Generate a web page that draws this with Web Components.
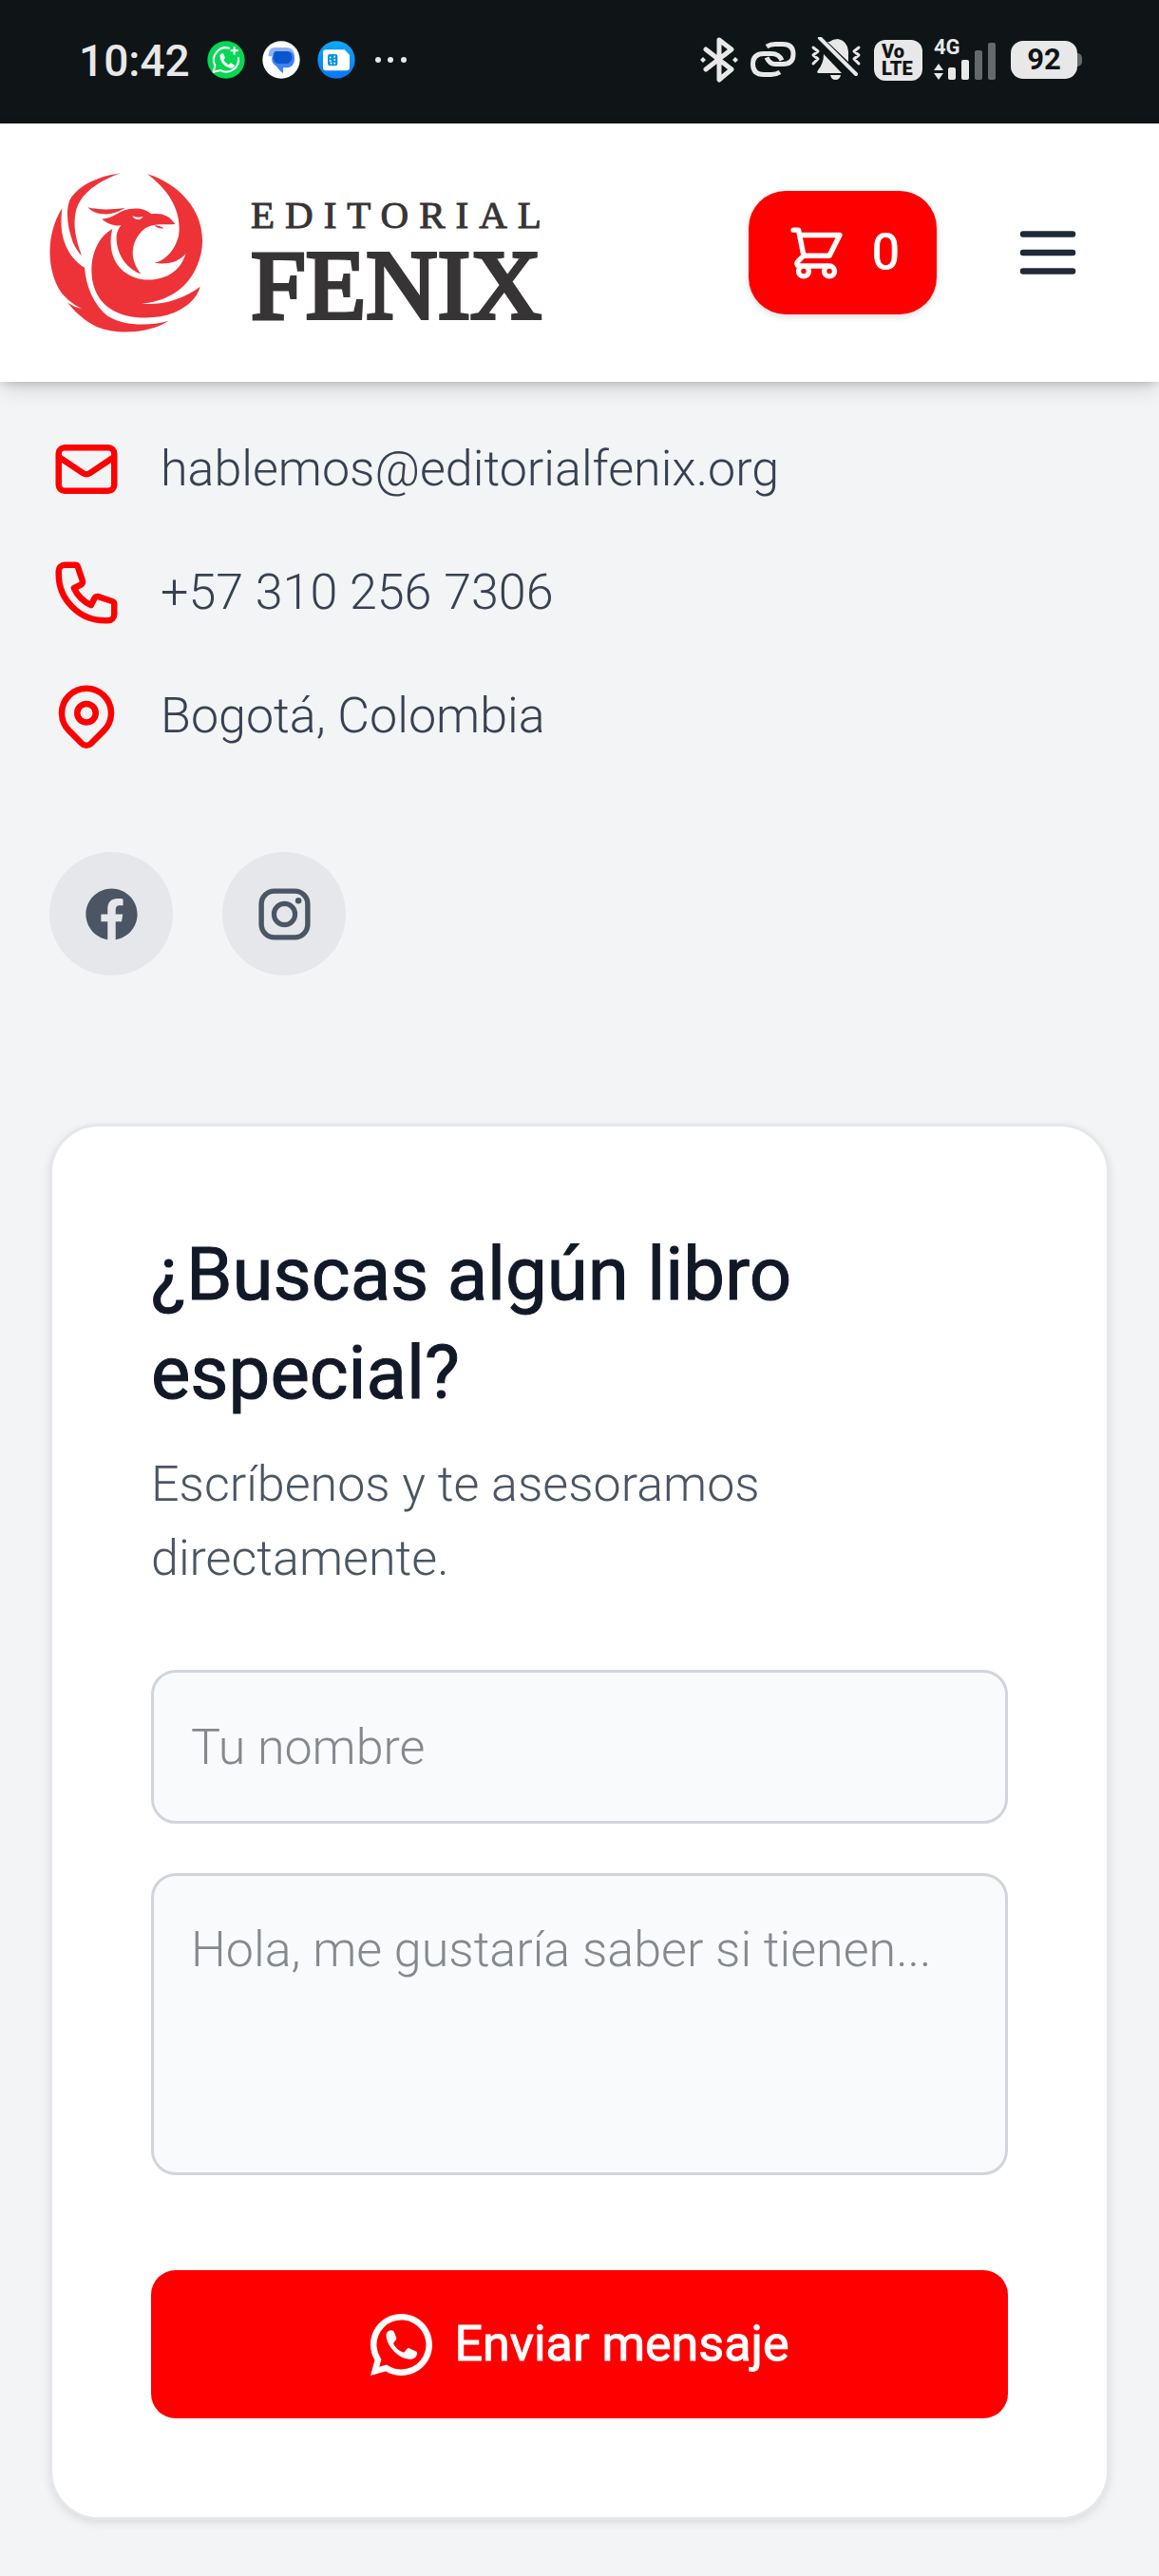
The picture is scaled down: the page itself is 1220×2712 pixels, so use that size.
<!DOCTYPE html>
<html lang="es">
<head>
<meta charset="UTF-8">
<meta name="viewport" content="width=device-width, initial-scale=1">
<title>Editorial Fenix</title>
<style>
    :root {
        --brand: #ff0000;
        --ink: #111827;
        --panel: #f3f4f6;
    }
    body {
        margin: 0;
        min-height: 100vh;
        background: var(--panel);
        color: #374151;
        font-family: Roboto, "Liberation Sans", sans-serif;
        font-size: 52px;
        line-height: 78px;
        font-weight: 300;
    }
    main {
        padding: 53px 52px 52px;
    }
    .contacts {
        display: flex;
        flex-direction: column;
        gap: 52px;
    }
    .social {
        display: flex;
        gap: 52px;
        margin: 104px 0 156px;
    }
</style>
</head>
<body>
<status-bar></status-bar>
<site-header count="0"></site-header>
<main>
    <div class="contacts">
        <contact-item icon="mail" href="mailto:hablemos@editorialfenix.org">hablemos@editorialfenix.org</contact-item>
        <contact-item icon="phone" href="tel:+573102567306">+57 310 256 7306</contact-item>
        <contact-item icon="pin">Bogotá, Colombia</contact-item>
    </div>
    <div class="social">
        <social-link icon="facebook" label="Facebook"></social-link>
        <social-link icon="instagram" label="Instagram"></social-link>
    </div>
    <contact-card>
        <span slot="title">¿Buscas algún libro especial?</span>
        <span slot="text">Escríbenos y te asesoramos directamente.</span>
    </contact-card>
</main>

<script>
const stroked = 'fill="none" stroke="currentColor" stroke-width="2" stroke-linecap="round" stroke-linejoin="round"';

const ICONS = {
    cart: `<path ${stroked} d="M3 3h2l.4 2M7 13h10l4-8H5.4M7 13L5.4 5M7 13l-2.293 2.293c-.63.63-.184 1.707.707 1.707H17m0 0a2 2 0 100 4 2 2 0 000-4zm-8 2a2 2 0 11-4 0 2 2 0 014 0z"/>`,
    menu: `<path ${stroked} d="M4 6h16M4 12h16M4 18h16"/>`,
    mail: `<path ${stroked} d="M3 8l7.89 5.26a2 2 0 002.22 0L21 8M5 19h14a2 2 0 002-2V7a2 2 0 00-2-2H5a2 2 0 00-2 2v10a2 2 0 002 2z"/>`,
    phone: `<path ${stroked} d="M3 5a2 2 0 012-2h3.28a1 1 0 01.948.684l1.498 4.493a1 1 0 01-.502 1.21l-2.257 1.13a11.042 11.042 0 005.516 5.516l1.13-2.257a1 1 0 011.21-.502l4.493 1.498a1 1 0 01.684.949V19a2 2 0 01-2 2h-1C9.716 21 3 14.284 3 6V5z"/>`,
    pin: `<path ${stroked} d="M17.657 16.657L13.414 20.9a1.998 1.998 0 01-2.827 0l-4.244-4.243a8 8 0 1111.314 0z"/><path ${stroked} d="M15 11a3 3 0 11-6 0 3 3 0 016 0z"/>`,
    facebook: `<path d="M12 2C6.478 2 2 6.477 2 12c0 4.99 3.656 9.126 8.437 9.879v-6.988h-2.54v-2.891h2.54V9.798c0-2.508 1.493-3.891 3.776-3.891 1.094 0 2.24.195 2.24.195v2.459h-1.264c-1.24 0-1.628.772-1.628 1.563v1.875h2.771l-.443 2.891h-2.328v6.988C18.344 21.129 22 16.992 22 12c0-5.523-4.477-10-10-10z"/>`,
    instagram: `<rect x="3" y="3" width="18" height="18" rx="5" fill="none" stroke="currentColor" stroke-width="2"/><circle cx="12" cy="12" r="4.1" fill="none" stroke="currentColor" stroke-width="1.9"/><circle cx="17.4" cy="6.7" r="1.2"/>`,
    whatsapp: `<path d="M7.25 18.49l.73.43A8 8 0 0 0 12 20a8 8 0 1 0-6.92-3.98l.43.73-.66 2.4 2.4-.66zM2 22l1.36-4.97A9.96 9.96 0 0 1 2 12C2 6.48 6.48 2 12 2s10 4.48 10 10-4.48 10-10 10c-1.84 0-3.57-.5-5.05-1.37L2 22z"/>
        <path d="M7.1 8.9C7.1 8 7.9 7.3 8.7 7.3c.5 0 .8.2 1 .7l.6 1.5c.2.5.1.8-.2 1.1l-.5.6c-.2.3-.2.5 0 .8.7 1.1 1.6 1.9 2.8 2.4.3.1.5.1.7-.2l.7-.8c.2-.3.5-.4.9-.2l1.9.9c.4.2.6.4.5.8-.1 1.1-1.2 1.8-2.4 1.8-3.6-.2-7.6-4.3-7.6-7.8z"/>`
};

class UiIcon extends HTMLElement {
    constructor() {
        super();
        this.attachShadow({ mode: 'open' });
    }

    connectedCallback() {
        // "tight" drops the empty margin round the drawing
        const box = this.hasAttribute('tight') ? '2 2 20 20' : '0 0 24 24';
        this.shadowRoot.innerHTML = `
            <style>
                :host { display: block; flex: none; width: 78px; height: 78px; }
                svg { display: block; width: 100%; height: 100%; }
            </style>
            <svg viewBox="${box}" fill="currentColor" aria-hidden="true">${ICONS[this.getAttribute('name')]}</svg>
        `;
    }
}

class StatusBar extends HTMLElement {
    constructor() {
        super();
        this.attachShadow({ mode: 'open' });
        this.shadowRoot.innerHTML = `
            <style>
                :host {
                    display: flex;
                    justify-content: space-between;
                    align-items: center;
                    height: 130px;
                    padding: 0 81px 4px 83px;
                    box-sizing: border-box;
                    background: #0f1416;
                    color: #e8e8e8;
                    font-weight: 500;
                }
                .side { display: flex; align-items: center; gap: 18px; }
                .right { gap: 12px; }
                .time { font-size: 46px; line-height: 56px; padding-top: 2px; }
                svg { display: block; flex: none; }
                .volte {
                    width: 51px;
                    height: 43px;
                    box-sizing: border-box;
                    padding: 3px 0 0 8px;
                    border-radius: 12px;
                    background: #e8e8e8;
                    color: #0f1416;
                    font-size: 20px;
                    font-weight: 900;
                    line-height: 18px;
                }
                .volte span { display: block; }
                .signal { position: relative; width: 69px; height: 48px; }
                .signal b {
                    position: absolute;
                    left: 0;
                    top: 0;
                    font-size: 22px;
                    line-height: 22px;
                    font-weight: 700;
                }
                .battery { display: flex; align-items: center; }
                .level {
                    width: 70px;
                    height: 40px;
                    border-radius: 13px;
                    background: #e8e8e8;
                    color: #0f1416;
                    font-size: 31px;
                    font-weight: 700;
                    line-height: 40px;
                    text-align: center;
                }
                .nub { width: 5px; height: 14px; border-radius: 0 5px 5px 0; background: #66696b; }
            </style>
            <div class="side">
                <span class="time">10:42</span>
                <svg width="40" height="40" viewBox="0 0 120 120">
                    <circle cx="60" cy="60" r="59" fill="#06d755"/>
                    <path d="M70 23A39 39 0 0 0 25 78L20 98L42 93A39 39 0 0 0 99 54" fill="none" stroke="#fff" stroke-width="6" stroke-linecap="round" stroke-linejoin="round"/>
                    <path d="M40 46q4-8 11-6l6 13-5 8q6 10 16 15l7-6 12 7q-2 10-13 9Q42 80 40 46z" fill="#fff"/>
                    <path d="M86 21v20M76 31h20" stroke="#fff" stroke-width="6" stroke-linecap="round"/>
                </svg>
                <svg width="40" height="40" viewBox="0 0 120 120">
                    <circle cx="60" cy="60" r="59" fill="#fff"/>
                    <path d="M39 21h35c22 0 28 14 28 28H20c0-18 6-28 19-28z" fill="#8ab0f8"/>
                    <path d="M48 34h36c12 0 18 10 18 23 0 18-11 28-26 28H66v17c-8-5-14-12-21-22-12-7-16-17-14-29z" fill="#4083f5"/>
                    <path d="M44 33h34c10 0 16 8 16 19s-7 20-17 20H52c-10 0-17-9-17-20s2-19 9-19z" fill="#0957d0"/>
                </svg>
                <svg width="40" height="40" viewBox="0 0 120 120">
                    <defs><linearGradient id="sim" x2="0" y2="1"><stop stop-color="#10a8f5"/><stop offset="1" stop-color="#0878f8"/></linearGradient></defs>
                    <circle cx="60" cy="60" r="59" fill="url(#sim)"/>
                    <path d="M28 28h58l16 17v39q0 10-10 10H28q-10 0-10-10V38q0-10 10-10z" fill="#fff"/>
                    <rect x="33" y="42" width="31" height="37" rx="7" fill="#0a93df"/>
                    <path d="M41 50v5M41 60v5M41 71h5M52 50h5M52 60h5M52 71h5" stroke="#fff" stroke-width="5"/>
                </svg>
                <svg width="36" height="40" viewBox="0 0 36 40" fill="currentColor">
                    <circle cx="6" cy="20" r="3"/><circle cx="19" cy="20" r="3"/><circle cx="33" cy="20" r="3"/>
                </svg>
            </div>
            <div class="side right">
                <svg width="42" height="48" viewBox="0 0 42 48" fill="none" stroke="currentColor" stroke-width="5" stroke-linejoin="round" stroke-linecap="round">
                    <path d="M7 13l27 21-13 11V3l13 10L7 34"/>
                    <path d="M4 21l3 3-3 3-3-3zM38 21l3 3-3 3-3-3z" fill="currentColor" stroke="none"/>
                </svg>
                <svg width="51" height="48" viewBox="0 0 51 48" fill="none" stroke="currentColor" stroke-width="5">
                    <path d="M17 10q4-2.500 9-2.500h8q11 0 11 10.500t-11 10.500h-8q-6 0-9-7"/>
                    <path d="M31 37q-4 2.500-9 2.500h-8q-11.500 0-11.500-11t11.500-11h8q8 0 11 7"/>
                </svg>
                <svg width="55" height="48" viewBox="0 0 55 48" fill="currentColor">
                    <path d="M20 5q4-3 9-3 10 2 11 13v11L18 5zM14 18l19 20H9q-3 0-1-3 6-7 6-17zM21 40h11q-1 5-5.500 5T21 40z"/>
                    <path d="M10 1l38 38" fill="none" stroke="currentColor" stroke-width="4" stroke-linecap="round"/>
                    <path d="M3 11l5 4-5 4 5 4-5 5M51 11l-5 4 5 4-5 4 5 5" fill="none" stroke="currentColor" stroke-width="3" stroke-linecap="round" stroke-linejoin="round"/>
                </svg>
                <div class="volte"><span>Vo</span><span>LTE</span></div>
                <div class="signal">
                    <b>4G</b>
                    <svg width="69" height="48" viewBox="0 0 69 48" fill="currentColor">
                        <path d="M0 35l5-7 5 7zM0 38h10l-5 7z"/>
                        <rect x="15" y="32" width="8" height="13" rx="2"/>
                        <rect x="29" y="24" width="8" height="21" rx="2"/>
                        <rect x="43" y="14" width="8" height="31" rx="2" fill="#66696b"/>
                        <rect x="57" y="6" width="8" height="39" rx="2" fill="#66696b"/>
                    </svg>
                </div>
                <div class="battery"><span class="level">92</span><span class="nub"></span></div>
            </div>
        `;
    }
}

class FenixLogo extends HTMLElement {
    constructor() {
        super();
        this.attachShadow({ mode: 'open' });
        this.shadowRoot.innerHTML = `
            <style>
                :host { display: block; }
                a { display: flex; align-items: center; gap: 50px; color: #373435; text-decoration: none; }
                svg { display: block; width: 162px; height: 168px; }
                .words {
                    display: flex;
                    flex-direction: column;
                    gap: 17px;
                    padding-top: 10px;
                    font-family: "Liberation Serif", serif;
                    font-weight: 400;
                }
                .top { font-size: 41px; line-height: 40px; letter-spacing: 11px; -webkit-text-stroke: 1px; }
                .name { font-size: 104px; line-height: 74px; -webkit-text-stroke: 4px; }
            </style>
            <a href="/">
                <svg viewBox="66 66 486 504" fill="#ee3338" aria-hidden="true">
                    <path d="M292 67C225 76 160 102 130 152C116 190 124 240 140 285C148 303 158 317 168 328C150 280 140 235 149 190C162 132 220 92 292 67z"/>
                    <path d="M106 178C70 235 56 315 78 390C98 455 150 520 215 552C290 582 390 568 443 533C375 552 300 548 250 518C205 482 182 425 177 365C140 345 112 300 105 250C102 220 104 195 106 178z"/>
                    <path d="M265 243C190 285 185 400 220 455C265 530 370 530 430 517C485 503 530 470 542 425C490 465 420 485 358 479C450 470 522 420 545 320C568 205 490 105 375 70C450 125 485 195 474 265C463 310 430 345 398 350C440 358 478 345 497 320C478 380 430 408 360 403C300 392 262 350 260 290C259 270 262 255 265 243z"/>
                    <path d="M187 175C220 183 260 183 305 177C280 192 260 198 235 196C212 194 198 186 187 175z"/>
                    <path d="M232 212C265 208 275 195 300 185C330 175 365 175 388 196C420 192 445 200 463 228C430 230 395 225 370 240C335 265 320 310 335 350C340 365 348 375 355 385C310 370 275 320 278 265C280 250 285 240 292 232C270 234 248 226 232 212zM398 232C410 233 420 236 427 241C415 243 405 240 398 232z"/>
                    <path fill="#fff" d="M327 202Q343 209 362 204Q356 215 342 213Q332 210 327 202zM93 430Q120 472 168 495Q120 485 88 440z"/>
                </svg>
                <span class="words">
                    <span class="top">EDITORIAL</span>
                    <span class="name">FENIX</span>
                </span>
            </a>
        `;
    }
}

class SiteHeader extends HTMLElement {
    constructor() {
        super();
        this.attachShadow({ mode: 'open' });
    }

    connectedCallback() {
        this.shadowRoot.innerHTML = `
            <style>
                :host {
                    display: block;
                    position: relative;
                    background: #fff;
                    box-shadow: 0 13px 20px -3px rgba(0, 0, 0, 0.1), 0 6px 13px -6px rgba(0, 0, 0, 0.1), 0 0 10px rgba(0, 0, 0, 0.15);
                }
                header {
                    display: flex;
                    align-items: center;
                    justify-content: space-between;
                    height: 272px;
                    padding: 0 52px;
                }
                nav { display: flex; gap: 52px; }
                button {
                    display: flex;
                    align-items: center;
                    border: 0;
                    background: none;
                    font: inherit;
                    cursor: pointer;
                }
                .cart {
                    gap: 26px;
                    height: 130px;
                    padding: 0 39px;
                    border-radius: 39px;
                    background: var(--brand);
                    color: #fff;
                    font-weight: 400;
                    -webkit-text-stroke: 1px;
                    box-shadow: 0 3px 7px rgba(0, 0, 0, 0.12);
                }
                .cart ui-icon { width: 65px; height: 65px; }
                .menu { padding: 26px; color: #1f2937; }
            </style>
            <header>
                <fenix-logo></fenix-logo>
                <nav>
                    <button class="cart" type="button" aria-label="Carrito"><ui-icon name="cart"></ui-icon><span>${this.getAttribute('count')}</span></button>
                    <button class="menu" type="button" aria-label="Menú"><ui-icon name="menu"></ui-icon></button>
                </nav>
            </header>
        `;
    }
}

class ContactItem extends HTMLElement {
    constructor() {
        super();
        this.attachShadow({ mode: 'open' });
    }

    connectedCallback() {
        const href = this.getAttribute('href');
        this.shadowRoot.innerHTML = `
            <style>
                :host { display: flex; align-items: center; gap: 39px; }
                ui-icon { color: var(--brand); }
                a { color: inherit; text-decoration: none; }
            </style>
            <ui-icon name="${this.getAttribute('icon')}"></ui-icon>
            ${href ? `<a href="${href}"><slot></slot></a>` : '<slot></slot>'}
        `;
    }
}

class SocialLink extends HTMLElement {
    constructor() {
        super();
        this.attachShadow({ mode: 'open' });
    }

    connectedCallback() {
        this.shadowRoot.innerHTML = `
            <style>
                :host { display: block; }
                a {
                    display: grid;
                    place-items: center;
                    width: 130px;
                    height: 130px;
                    border-radius: 50%;
                    background: #e5e7eb;
                    color: #4b5563;
                }
                ui-icon { width: 65px; height: 65px; }
            </style>
            <a href="#" aria-label="${this.getAttribute('label')}"><ui-icon name="${this.getAttribute('icon')}"></ui-icon></a>
        `;
    }
}

class ContactCard extends HTMLElement {
    constructor() {
        super();
        this.attachShadow({ mode: 'open' });
        this.shadowRoot.innerHTML = `
            <style>
                :host {
                    display: block;
                    padding: 104px;
                    border: 3px solid #e5e7eb;
                    border-radius: 52px;
                    background: #fff;
                    box-shadow: 0 3px 10px rgba(0, 0, 0, 0.1);
                }
                h2 {
                    margin: 0 0 26px;
                    color: var(--ink);
                    font-size: 78px;
                    line-height: 104px;
                    font-weight: 400;
                    -webkit-text-stroke: 1px;
                }
                p { margin: 0 0 78px; color: #4b5563; }
                form { display: flex; flex-direction: column; gap: 52px; }
                input, textarea {
                    display: block;
                    width: 100%;
                    box-sizing: border-box;
                    margin: 0;
                    padding: 39px;
                    border: 3px solid #d1d5db;
                    border-radius: 26px;
                    background: #f9fafb;
                    color: inherit;
                    font: inherit;
                    resize: none;
                    outline: none;
                }
                input { height: 162px; }
                textarea { height: 318px; overflow: hidden; }
                ::placeholder { color: #85898e; opacity: 1; }
                button {
                    display: flex;
                    align-items: center;
                    justify-content: center;
                    gap: 24px;
                    margin: 48px 0 0;
                    padding: 39px;
                    border: 0;
                    border-radius: 26px;
                    background: var(--brand);
                    color: #fff;
                    font: inherit;
                    font-weight: 400;
                    -webkit-text-stroke: 1px;
                    cursor: pointer;
                }
                button ui-icon { width: 65px; height: 65px; }
            </style>
            <h2><slot name="title"></slot></h2>
            <p><slot name="text"></slot></p>
            <form>
                <input type="text" name="name" aria-label="Tu nombre" placeholder="Tu nombre">
                <textarea name="message" rows="3" aria-label="Mensaje" placeholder="Hola, me gustaría saber si tienen..."></textarea>
                <button type="submit"><ui-icon name="whatsapp" tight></ui-icon>Enviar mensaje</button>
            </form>
        `;
    }

    connectedCallback() {
        this.shadowRoot.querySelector('form').addEventListener('submit', (e) => e.preventDefault());
    }
}

customElements.define('ui-icon', UiIcon);
customElements.define('status-bar', StatusBar);
customElements.define('fenix-logo', FenixLogo);
customElements.define('site-header', SiteHeader);
customElements.define('contact-item', ContactItem);
customElements.define('social-link', SocialLink);
customElements.define('contact-card', ContactCard);
</script>
</body>
</html>
